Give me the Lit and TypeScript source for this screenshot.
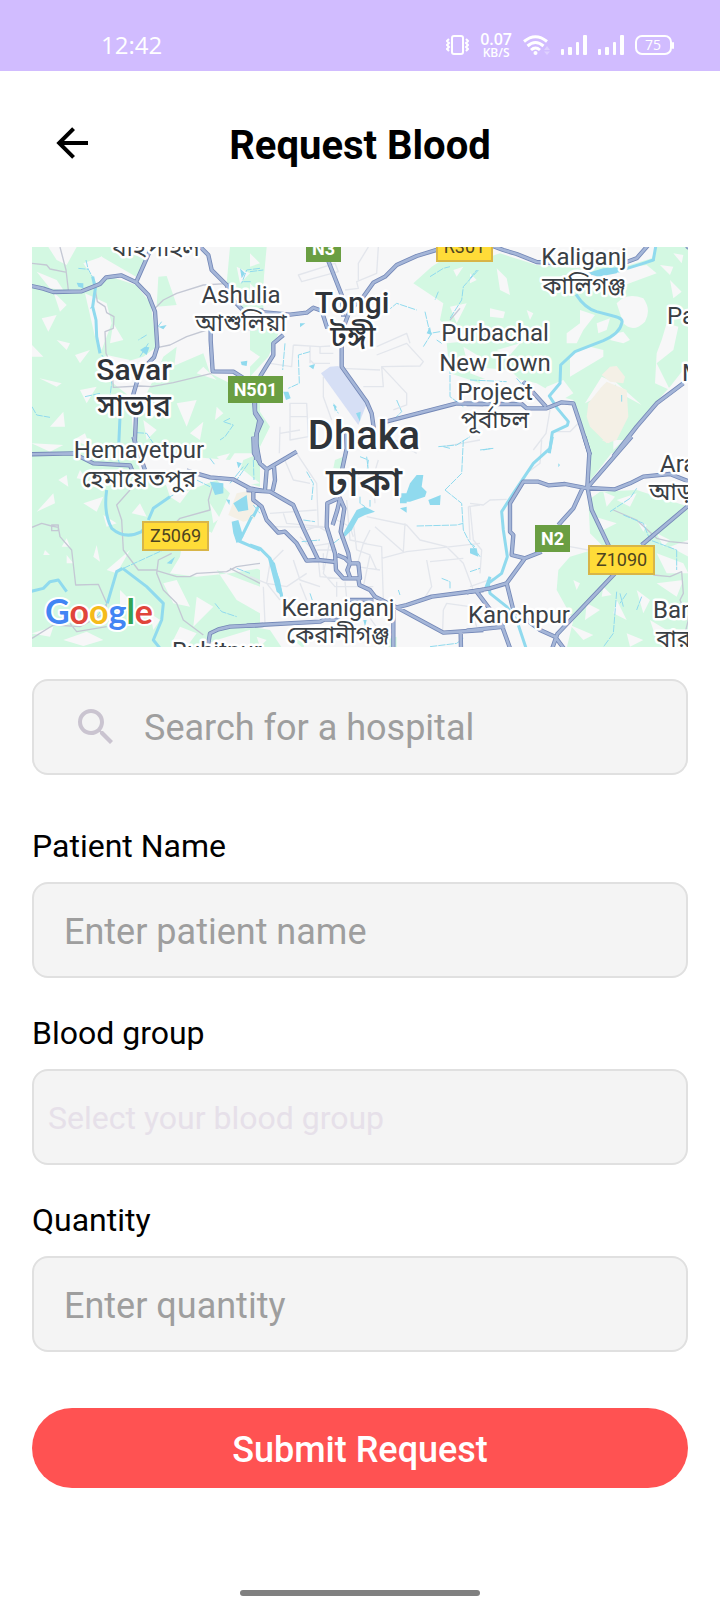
import { LitElement, html, css, svg } from "lit";
import { customElement } from "lit/decorators.js";

interface Tile {
  x: number;
  y: number;
  green: string;
  clear: string;
  water: string;
  lakes: string;
  streams: string;
  street: string;
  lane: string;
  road: string;
  sand?: string;
  airport?: string;
}

/* Each tile holds its shapes at three units per map pixel. */
const TILES: Tile[] = [
  {
    x: 30, y: 240,
    green: "M0 21H250L200 60 225 105 318 135 362 190 380 320 340 350 200 390 300 470 315 640H0ZM385 110L410 108 440 195 380 200ZM230 21H300L345 60 318 110 215 50ZM600 21H700V210L640 205 590 130ZM380 400L520 340 540 400 600 430V490L690 480V640H315L320 540 350 460ZM400 350L440 320 430 400 370 420Z",
    clear: "M55 21L140 21 110 75 80 60ZM20 95L80 120 100 150 60 145ZM160 70L215 50 240 100 200 130ZM70 155L110 195 90 215ZM35 235L80 225 55 275ZM165 160L230 190 245 250 215 330 195 290ZM6 315L40 350 6 350ZM80 300L120 310 110 330ZM135 345L180 330 150 370ZM28 415L95 430 80 440ZM150 450L200 440 170 490ZM60 560L100 515 105 560ZM130 600L165 580 180 620ZM440 490L500 480 470 560ZM340 540L380 570 350 600ZM250 250L280 300 240 310ZM620 80L660 100 630 130ZM520 380L560 420 500 400ZM480 580L520 545 510 600ZM350 490L390 500 370 530ZM230 345L300 360 260 400ZM560 500L580 520 555 540Z",
    lakes: "M345 320L358 322 350 345 330 330ZM385 260L410 255 400 268ZM632 365L652 362 650 378 635 375ZM140 128L160 130 160 145 145 140ZM300 21L310 21 312 45ZM630 85L645 100 635 115Z",
    water: "M188 110L196 145 188 200 198 240 200 290 210 340M270 530L266 620",
    streams: "M145 85L175 88 188 112M168 60L175 90M190 200L180 205M215 345L236 370 245 430 240 470M6 500L20 525 60 532M165 470L210 460M350 285L325 300M355 310L330 350M395 245L378 268M690 85L650 90 635 130M600 535L580 545 610 555 585 590 570 600M320 578L350 580 370 610M640 125L665 125",
    lane: "M90 21L108 90 115 150M6 70L50 75 60 87 110 97M195 145L202 185 225 200 230 218 252 230 250 265 225 275 228 340 245 380 250 442 330 438 365 440 430 428 545 400M375 205L400 180 440 160 520 135 600 130M385 322L420 315 470 290 530 270",
    street: "M600 270L680 270",
    road: "M0 137L40 146 70 156 155 154 210 132 228 112 273 106 318 127 355 165 375 215 382 320 372 352 330 395 308 470 318 530 312 660M370 10L350 55 318 127M505 15L535 45 545 90 590 135 600 170 640 212 700 212M542 270L542 300 548 394 610 395 650 420M675 480V520L688 540 680 580 678 660",
  },
  {
    x: 250, y: 240,
    green: "M0 21H50L40 130 0 200ZM0 260L90 270 55 350 0 410ZM545 80L600 45 690 50V300L600 270 570 240 580 190 490 130ZM590 310L690 300V430L600 400ZM0 490L20 500 60 560 30 620 0 580Z",
    clear: "M0 40L30 70 0 80ZM600 200L650 190 620 250ZM610 90L640 80 620 110ZM0 330L30 350 0 380ZM640 320L690 350 650 360ZM0 130L20 150 0 170Z",
    airport: "M213 400L240 380 265 378 350 492 325 555Z",
    lakes: "M100 455L115 455 122 475 108 480ZM318 520L332 515 330 545ZM176 378L195 372 190 388ZM150 250L166 250 150 262ZM250 490L260 500 255 515ZM530 280L540 260 545 285Z",
    water: "",
    streams: "M105 310L98 390M180 335L145 345 148 430 115 445M250 495L265 520M410 215L440 190 500 210M525 215L540 280 600 270M545 280L520 320M600 380L600 470 640 500M565 155L555 180M685 90L640 140 635 180 600 235M575 310L560 300M0 95L40 90M540 110L580 85 600 80M565 620L620 615 660 590M440 480L455 515 435 535M650 21L610 60",
    street: "M145 105L255 70 265 95 155 125ZM385 21L380 100 320 125 325 145 285 150M355 21L325 70 325 120M130 315L210 320 240 318M130 315L125 380 60 370M180 320V370M210 318V340H250M380 345L470 310 520 365 510 378 395 380 400 440 340 440M395 380L470 460V495L430 510M380 320L470 280 480 310M275 385L390 390M220 410V470L245 540M120 490H170L175 590 120 600ZM120 530H172M90 560L88 640M90 580L150 570M180 360L190 370H240M500 640L420 590",
    lane: "M600 240L630 205",
    road: "M230 50L275 165 280 230M565 28L500 48 440 75 405 110 370 128 340 170 300 210 285 250 275 320 275 380 350 485 365 520 372 570M-10 212L120 224 170 218 190 203 215 212 232 265M100 285L70 310 70 345 30 410M12 480L15 515 35 545 20 580 15 640M400 547L620 490 700 492",
  },
  {
    x: 470, y: 240,
    green: "M30 60L90 40 200 75 330 85 480 75 545 55 560 21H655V370L600 440 510 540 440 640H365L330 540 310 480 270 470 200 430 110 410 0 420V60Z",
    clear: "M340 100L530 75 560 100 450 140 360 130ZM80 85L110 115 120 165 90 150ZM60 205L105 215 100 235 60 230ZM440 190Q470 155 520 175 545 210 525 245 490 280 460 250ZM330 210L375 225 340 270 320 310 290 310 290 280 330 250ZM300 345L360 320 400 330 400 350 300 410ZM590 250L625 260 610 330 560 370 600 450 555 430 560 340 575 300ZM440 280L460 275 480 300 460 310 420 300ZM570 75L610 80 600 105ZM600 120L635 155 610 175ZM345 490L395 410 440 430 405 460ZM430 420L515 495 450 460ZM80 330L150 310 120 345ZM0 100L20 120 0 130ZM610 40L640 45 635 70ZM210 470L230 440 280 420 310 460 260 490ZM380 250L420 235 410 270 385 280ZM250 130L270 145 255 150ZM0 380L120 390 160 430 80 430 0 400ZM170 210L190 220 180 240Z",
    sand: "M355 490L395 440 410 425 470 450 475 530 440 600 410 610 360 560 350 530ZM395 405L420 380 440 378 465 410 460 430 420 425Z",
    lakes: "M350 100L400 85 445 82 440 100 385 110Z",
    water: "M345 103L450 92 520 70 550 60 558 15M318 163Q345 205 380 215L430 228Q462 235 455 250 450 280 400 302L315 335 272 375 270 430 238 468 262 505 295 545 292 556 247 577 238 640",
    streams: "M0 420L110 425M140 415L170 450M455 465V485M0 115L20 90M40 630L65 625M515 70L555 60",
    street: "M240 510L228 580 190 630M250 575L300 575 325 550",
    lane: "",
    road: "M60 15L100 30 140 42 200 66 330 75M460 70L500 55 535 15M-10 492L155 492 170 505 230 505 275 487 310 490 330 550 360 645M160 425L228 500M640 430L560 490 500 560 430 650M650 18L665 30",
  },
  {
    x: 30, y: 440,
    green: "M0 0H300L340 120 480 150 560 120 600 160 540 290 560 320 690 390V560L560 600 500 625H0ZM350 0H640L600 60 480 50 360 30ZM640 60L690 40V140L620 120Z",
    clear: "M5 10L100 15 60 35ZM85 120L110 105 115 140ZM20 215L70 160 75 190ZM160 190L220 170 200 215ZM110 295L120 320 95 320ZM110 345L130 370 110 370ZM200 315L190 350 210 365ZM230 390L300 330 260 400ZM45 330L60 345 40 345ZM305 220L330 190 350 230ZM460 290L540 275 630 330 690 340V385L600 400 500 410 420 400 450 350ZM400 430L440 420 480 500 430 490ZM500 470L550 500 490 560ZM560 390L620 480 690 520V440ZM270 450L310 490 270 500ZM360 520L390 540 370 570ZM5 580L70 560 60 590ZM420 170L480 150 450 190ZM540 190L570 235 550 250ZM600 100L640 90 690 130 600 140ZM400 110L450 160 420 170ZM150 90L170 120 140 115ZM560 50L600 40 580 70ZM100 600L170 575 220 600 160 618ZM220 225L260 250 230 260ZM450 560L500 580 470 620 430 600ZM150 505L175 510 155 530Z",
    sand: "M620 160L670 150 675 235 640 245 595 225Z",
    lakes: "M540 125L580 130 580 160 555 165ZM610 190L650 165 655 210 625 215ZM605 245L625 240 640 290 620 310 610 280ZM588 178L600 180 598 195ZM410 370L435 350 425 372ZM620 65L635 70 625 85Z",
    water: "M230 150Q220 220 245 265 285 300 335 275 350 260 345 245M355 240L370 205 420 170M232 490L260 395 278 385M278 385L350 440 400 490 395 540 370 600 390 625M0 455L40 445 60 425 85 420 110 455M620 300L690 330M665 230L630 300M690 190L670 230",
    streams: "M280 385L400 330M500 120L540 140M540 55L555 75M655 70L620 120M555 490L575 515 620 530M620 385L660 400M600 130L640 80M420 170L430 165M265 60L275 90M200 530L230 490",
    lane: "M6 262L35 250 65 258 85 262 90 290 125 330 137 435 205 433 230 490 225 520 150 560 70 555 6 595M65 255H85V272H65ZM300 150L260 195 275 240 280 330 325 390 380 390M550 130L535 180 540 210 450 235 440 245M425 340L385 360 380 400 400 450 440 490 460 540 520 585M380 392L440 410 480 410 500 400 590 395 620 380 690 370M600 385L640 405 690 430M120 550L140 575 230 560",
    street: "",
    road: "M0 43L130 40 190 70 300 76 310 100M310 -10L345 90M470 92L540 112 610 118 660 145 700 153M535 610L540 580 565 568 600 560 700 555M670 -10L672 40 690 68",
  },
  {
    x: 250, y: 440,
    green: "M255 60L280 50V90L250 85ZM0 445L30 480 0 485ZM0 560L60 570 100 630H0ZM400 600L440 590V625H400ZM130 600L170 590 160 625Z",
    clear: "M20 590L50 600 30 620Z",
    lakes: "M480 130L500 105 520 105 515 140 530 155 525 170 480 185 460 185ZM535 180L572 165 570 195 540 195ZM450 160L470 160 470 190 450 190ZM320 210L345 200 375 215 345 225 325 235 305 270 285 290 280 280ZM50 340L75 370 100 470 80 455ZM450 205L470 200 470 218ZM340 540L350 540 345 560Z",
    water: "M0 315L30 325 60 355 85 420 95 470",
    streams: "M250 310L310 265M10 195L30 220M10 60L12 120M0 230L20 215M330 170V190L345 200M360 180V200M330 50L355 60 350 100 370 130M350 50L355 90M585 150L635 100 640 0M585 150L635 190 640 270 655 300 690 350M500 258L620 255 640 250M160 240L195 245M155 305L210 300M575 415L600 425V445M445 450L450 465M540 620L620 610 640 595M180 460L190 490M580 20L600 25M170 95L190 130 185 180",
    street: "M140 40L200 130 205 260 240 280M100 50L130 120 180 130M60 220L200 210M100 220L110 250 220 260M60 260L230 262M350 230L470 255 510 300 590 320 640 370 670 450M375 260L460 335 465 250M360 270L340 310 395 320 400 480M395 355L470 335 690 310M310 250L320 330 360 345 380 390M340 310L320 380M360 345L340 440M320 380L390 390M205 360L210 410 320 420M240 300L220 400 255 440 320 440 370 440M150 290L180 320 240 310M100 330L60 370 50 430 90 480M0 410L50 430 110 440 170 400M260 240L300 260 310 290M530 360L545 440 520 480M540 365L640 355M655 200L690 195M655 200L660 300M690 0L580 20M580 510L590 490 660 500 680 560M580 510L578 570M40 440L45 550M150 430L170 480M385 60L370 110 375 190M290 180L300 300 350 310M200 330L260 330M170 270L200 260M130 360L150 420 210 440M260 425V470M285 425L290 475M350 520L400 590M220 340V390",
    lane: "",
    road: "M288 -20L290 25 276 90M-10 150L60 155 130 195 160 265 205 360 170 362 140 310 105 275 85 278 50 240 35 200 10 180V150M15 -10L30 70 50 88 140 35M50 88L45 150M72 80L75 120 68 152M265 175L232 190 230 260 255 340 258 390 280 415 330 415 325 370 300 370 295 340 272 275 283 205 270 175 262 210 248 255M205 360L258 366M262 345L285 355 300 370 292 390 300 412M325 415L328 435 360 450 375 470 440 502 470 495 545 470 700 450M440 502L580 578 700 570M632 578L633 625M430 510L430 625M-10 557L210 545 225 538 270 540M300 480L370 480",
  },
  {
    x: 470, y: 440,
    green: "M352 0H455L370 110 352 130ZM355 180L390 155 500 150 655 200V625H290L310 540 260 450 265 390 300 350 400 320 360 280Z",
    clear: "M400 155L435 170 410 200ZM375 230L440 250 400 270ZM500 240L530 255 520 275ZM560 280L600 300 580 320ZM560 430L640 420 620 470ZM400 440L425 465 395 470ZM440 480L470 540 430 520ZM350 490L390 510 345 540ZM500 450L540 480 520 520ZM300 555L370 585 340 600ZM560 340L640 370 655 400 590 400ZM470 580L520 600 480 620ZM540 540L590 570 560 600ZM440 180L480 200 500 160ZM430 0L460 0 430 30ZM600 320L655 300V350ZM310 420L330 430 320 450Z",
    sand: "M395 0H430L415 10Z",
    lakes: "M265 70L270 75 265 82ZM0 325L20 325 25 350 0 340Z",
    water: "M247 -10L240 25 190 70 130 160 95 215 100 270 112 350 95 400 55 430 60 460 110 500 140 540 170 630M60 410L45 450",
    streams: "M30 30L70 25M420 215L480 175 500 145M440 455L430 580 400 621M450 460L460 500M470 460L450 490M515 470L500 510M460 225L520 250 540 300 620 330M620 330L620 390M0 310L15 320M0 395L30 385",
    street: "M0 190L40 195 60 180 110 178M0 200L10 300 35 330 30 400M300 320L355 330M215 0L210 70 170 100M0 440L70 415",
    lane: "M430 210L500 240 560 295 600 305 655 310M550 405L600 410 635 395 640 460 630 480 655 540 640 600",
    road: "M343 -10L358 40 352 140 365 210 420 325M485 -10L350 145M-10 457L60 445 110 430 165 355 215 335M265 255L310 205 340 140M165 355L125 345 130 285 120 275 120 190 160 125 205 125 235 136 285 132 340 143 435 148 480 130 520 110 600 102 665 128M655 197L515 315M435 400L262 582 245 630M110 430L130 510 210 570 255 590 285 630M20 455L95 555 122 630M-10 572L105 560",
  },
];

const at = (t: Tile) => `translate(${t.x} ${t.y}) scale(0.33333)`;

const layer = (name: keyof Tile, cls: string) =>
  svg`<g class=${cls}>${TILES.map((t) =>
    t[name] ? svg`<path transform=${at(t)} d=${t[name] as string}></path>` : null
  )}</g>`;

const PLACES: [string, number, number, string][] = [
  ["বাইপাইল", 156, 256, "town"],
  ["Ashulia", 241, 303, "town"],
  ["আশুলিয়া", 241, 331, "town"],
  ["Tongi", 352, 313, "city"],
  ["টঙ্গী", 353, 347, "city"],
  ["Savar", 134, 380, "city"],
  ["সাভার", 134, 416, "city"],
  ["Hemayetpur", 139, 458, "town"],
  ["হেমায়েতপুর", 139, 487, "town"],
  ["Dhaka", 364, 449, "capital"],
  ["ঢাকা", 364, 496, "capital"],
  ["Purbachal", 495, 341, "town"],
  ["New Town", 495, 371, "town"],
  ["Project", 495, 400, "town"],
  ["পূর্বাচল", 495, 428, "town"],
  ["Kaliganj", 584, 265, "town"],
  ["কালিগঞ্জ", 584, 294, "town"],
  ["Keraniganj", 338, 616, "town"],
  ["কেরানীগঞ্জ", 338, 643, "town"],
  ["Kanchpur", 519, 623, "town"],
  ["Ruhitpur", 217, 659, "town"],
  ["Pa", 667, 324, "town edge"],
  ["M", 682, 381, "town edge"],
  ["Ara", 660, 472, "town edge"],
  ["আড়", 649, 500, "town edge"],
  ["Bar", 653, 618, "town edge"],
  ["বার", 656, 647, "town edge"],
];

const SHIELDS: [string, number, number, number, number, string][] = [
  ["N3", 306, 235, 35, 27, "national"],
  ["R301", 437, 233, 55, 28, "regional"],
  ["N501", 228, 376, 55, 27, "national"],
  ["N2", 535, 525, 35, 27, "national"],
  ["Z5069", 143, 522, 65, 28, "regional"],
  ["Z1090", 589, 546, 65, 28, "regional"],
];

@customElement("area-map")
export class AreaMap extends LitElement {
  static styles = css`
    :host { display: block; }
    svg { display: block; width: 100%; height: 400px; background: #f7f7f8; }
    path { stroke-linejoin: round; }
    .green { fill: #d3f8e2; }
    .clear { fill: #f7f7f8; }
    .sand { fill: #f4f0e6; }
    .airport { fill: #d6dff5; }
    .lakes { fill: #90daee; }
    .water { fill: none; stroke: #90daee; stroke-width: 9; }
    .streams { fill: none; stroke: #90daee; stroke-width: 3; stroke-dasharray: 22 3; }
    .street { fill: none; stroke: #e3e6ec; stroke-width: 4; }
    .lane { fill: none; stroke: #c4c8d4; stroke-width: 4; }
    .casing { fill: none; stroke: #7488b7; stroke-width: 13; }
    .road { fill: none; stroke: #a5b6d8; stroke-width: 8; }
    text { font-family: Roboto, "Noto Sans Bengali", sans-serif; }
    .place {
      fill: #3a3f45; text-anchor: middle; paint-order: stroke;
      stroke: #fff; stroke-width: 5; stroke-linejoin: round;
    }
    .edge { text-anchor: start; }
    .town { font-size: 24px; }
    .city { font-size: 30px; font-weight: 500; fill: #2f343a; }
    .capital { font-size: 40px; font-weight: 500; fill: #2f343a; }
    .sign { font-size: 18px; text-anchor: middle; }
    .plate.national { fill: #6a9e42; }
    .plate.regional { fill: #ffdc38; stroke: #d8b548; stroke-width: 2; }
    .sign.national { fill: #fff; font-weight: 700; }
    .sign.regional { fill: #4d4420; }
    .logo {
      font-family: Lato, sans-serif; font-size: 34px; font-weight: 700;
      paint-order: stroke; stroke: #fff; stroke-width: 4; stroke-linejoin: round;
    }
    .blue { fill: #4285f4; }
    .red { fill: #e0453a; }
    .yellow { fill: #f5bb1a; }
    .leaf { fill: #34a453; }
  `;

  render() {
    return html`
      <svg viewBox="32 247 656 400" preserveAspectRatio="xMidYMid slice" role="img" aria-label="Map of Dhaka">
        ${layer("green", "green")} ${layer("clear", "clear")} ${layer("sand", "sand")}
        ${layer("airport", "airport")} ${layer("street", "street")} ${layer("lane", "lane")}
        ${layer("lakes", "lakes")} ${layer("water", "water")} ${layer("streams", "streams")}
        ${layer("road", "casing")} ${layer("road", "road")}
        ${SHIELDS.map(([name, x, y, w, h, kind]) => svg`
          <rect class="plate ${kind}" x=${x} y=${y} width=${w} height=${h}></rect>
          <text class="sign ${kind}" x=${x + w / 2} y=${y + h / 2 + 6}>${name}</text>`)}
        ${PLACES.map(([name, x, y, kind]) => svg`<text class="place ${kind}" x=${x} y=${y}>${name}</text>`)}
        <text class="logo" x="45" y="624"><tspan class="blue">G</tspan><tspan class="red">o</tspan><tspan class="yellow">o</tspan><tspan class="blue">g</tspan><tspan class="leaf">l</tspan><tspan class="red">e</tspan></text>
      </svg>
    `;
  }
}

@customElement("status-bar")
export class StatusBar extends LitElement {
  static styles = css`
    :host {
      display: flex; align-items: center; justify-content: space-between;
      min-height: 30px; padding: 30px 46px 11px 101px;
      background: #d1bcff; color: #fff; font-family: "Open Sans", sans-serif;
    }
    svg { display: block; fill: none; stroke: #fff; }
    .time { font-size: 24px; line-height: 30px; }
    .icons { display: flex; align-items: center; gap: 11px; }
    .speed { display: flex; flex-direction: column; align-items: center; font-weight: 600; }
    .rate { font-size: 16px; line-height: 16px; }
    .unit { font-size: 12px; line-height: 12px; }
    .solid { fill: #fff; stroke: none; }
    .faint { fill: #fff; stroke: none; opacity: 0.3; }
    .charge { fill: #fff; stroke: none; font-size: 14px; text-anchor: middle; }
  `;

  private signal() {
    return html`<svg width="26" height="20" viewBox="0 0 26 20" aria-hidden="true">
      <g class="solid">
        <rect x="0" y="14" width="3" height="6" rx="1"></rect>
        <rect x="7" y="12" width="4" height="8" rx="1"></rect>
        <rect x="15" y="7" width="3" height="13" rx="1"></rect>
        <rect x="22" y="0" width="4" height="20" rx="1"></rect>
      </g>
    </svg>`;
  }

  render() {
    return html`
      <span class="time">12:42</span>
      <div class="icons">
        <svg width="23" height="20" viewBox="0 0 23 20" aria-hidden="true">
          <rect x="6" y="1" width="11" height="18" rx="2" stroke-width="2"></rect>
          <path stroke-width="2" d="M3 4L1 6 3 8 1 10 3 12 1 14 3 16M20 4L22 6 20 8 22 10 20 12 22 14 20 16"></path>
        </svg>
        <div class="speed"><span class="rate">0.07</span><span class="unit">KB/S</span></div>
        <svg width="27" height="20" viewBox="0 0 27 20" aria-hidden="true">
          <path stroke-width="3" d="M1 6.5Q12.500 -3 24 6.500M4.500 11Q12.500 4 20.500 11M8 15Q12.500 11 17 15"></path>
          <circle class="solid" cx="12.500" cy="18" r="2"></circle>
          <path class="faint" d="M21 15L24 11 27 15ZM21 16.500H27L24 20Z"></path>
        </svg>
        ${this.signal()} ${this.signal()}
        <svg width="39" height="20" viewBox="0 0 39 20" role="img" aria-label="Battery 75%">
          <rect x="1" y="1" width="35" height="18" rx="6" stroke-width="2"></rect>
          <rect class="solid" x="37" y="7" width="2" height="7" rx="1"></rect>
          <text class="charge" x="18" y="15">75</text>
        </svg>
      </div>
    `;
  }
}

@customElement("app-root")
export class AppRoot extends LitElement {
  static styles = css`
    :host {
      display: flex; flex-direction: column; min-height: 100vh;
      background: #fff; color: #000; font-family: Roboto, sans-serif;
    }
    * { box-sizing: border-box; }
    svg { display: block; flex: none; }
    .header {
      display: grid; grid-template-columns: 48px 1fr 48px; align-items: start;
      padding: 48px 48px 74px;
    }
    .back { width: 48px; height: 48px; padding: 0; border: 0; background: none; }
    .title { margin: 0; font-size: 40px; line-height: 54px; font-weight: 700; text-align: center; }
    .form { display: flex; flex-direction: column; padding: 0 32px; }
    .box {
      display: block; width: 100%; height: 96px; padding: 4px 30px 0;
      border: 2px solid #e0e0e0; border-radius: 16px; background: #f4f4f4;
      color: #000; font-family: inherit; font-size: 36px;
    }
    .search { display: flex; align-items: center; gap: 24px; margin: 32px 0 16px; padding: 0 38px; }
    .query {
      flex: 1; min-width: 0; padding: 2px 0 0; border: 0; outline: 0; background: none;
      color: #000; font-family: inherit; font-size: 36px;
    }
    .box::placeholder, .query::placeholder { color: #9e9e9e; opacity: 1; }
    .field { display: flex; flex-direction: column; gap: 16px; margin-top: 36px; }
    .label { font-size: 32px; line-height: 39px; }
    .pick { appearance: none; padding: 2px 14px 0; color: #e6e0e9; font-size: 32px; }
    .submit {
      height: 80px; margin-top: 56px; padding: 4px 0 0; border: 0; border-radius: 40px;
      background: #ff5252; color: #fff; font-family: inherit; font-size: 36px; font-weight: 500;
    }
    .home { width: 240px; height: 6px; margin: auto auto 4px; border-radius: 3px; background: #808080; }
  `;

  render() {
    return html`
      <status-bar></status-bar>
      <header class="header">
        <button class="back" type="button" aria-label="Back">
          <svg width="48" height="48" viewBox="0 0 24 24">
            <path d="M20 11V13H8L13.500 18.500 12.080 19.920 4.160 12 12.080 4.080 13.500 5.500 8 11H20Z"></path>
          </svg>
        </button>
        <h1 class="title">Request Blood</h1>
      </header>
      <form class="form" @submit=${(e: Event) => e.preventDefault()}>
        <area-map></area-map>
        <label class="box search">
          <svg width="48" height="48" viewBox="0 0 24 24" fill="#cac4d0" aria-hidden="true">
            <path d="M9.500 3A6.500 6.500 0 0 1 16 9.500C16 11.110 15.410 12.590 14.440 13.730L14.710 14H15.500L20.500 19 19 20.500 14 15.500V14.710L13.730 14.440C12.590 15.410 11.110 16 9.500 16A6.500 6.500 0 0 1 9.500 3M9.500 5C7 5 5 7 5 9.500S7 14 9.500 14 14 12 14 9.500 12 5 9.500 5Z"></path>
          </svg>
          <input class="query" type="text" placeholder="Search for a hospital" aria-label="Search for a hospital" />
        </label>
        <div class="field">
          <label class="label" for="patient">Patient Name</label>
          <input class="box" id="patient" type="text" placeholder="Enter patient name" />
        </div>
        <div class="field">
          <label class="label" for="group">Blood group</label>
          <select class="box pick" id="group">
            <option>Select your blood group</option>
            ${["A+", "A-", "B+", "B-", "AB+", "AB-", "O+", "O-"].map((g) => html`<option>${g}</option>`)}
          </select>
        </div>
        <div class="field">
          <label class="label" for="quantity">Quantity</label>
          <input class="box" id="quantity" type="text" inputmode="numeric" placeholder="Enter quantity" />
        </div>
        <button class="submit" type="submit">Submit Request</button>
      </form>
      <div class="home"></div>
    `;
  }
}
